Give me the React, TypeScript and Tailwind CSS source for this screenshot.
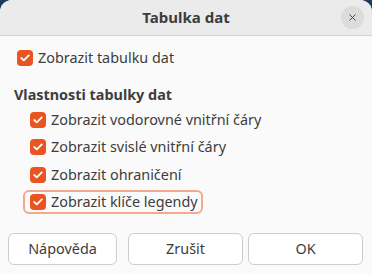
import { X } from "lucide-react";

interface CheckRowProps {
  label: string;
  focused?: boolean;
}

function CheckBox() {
  return (
    <span className="flex h-[16px] w-[16px] shrink-0 items-center justify-center rounded-[4px] bg-[#e95420]">
      <svg width="10" height="8" viewBox="0 0 10 8" fill="none">
        <path d="M1.2 4 L3.8 6.4 L8.8 1.4" stroke="white" strokeWidth="1.8" strokeLinecap="round" strokeLinejoin="round" />
      </svg>
    </span>
  );
}

function CheckRow({ label, focused }: CheckRowProps) {
  return (
    <div
      className={
        focused
          ? "flex h-[24px] w-fit items-center gap-[5px] rounded-[6px] border-2 border-[#f4a98c] pl-[5px] pr-[3px] -ml-[7px]"
          : "flex h-[24px] items-center gap-[5px]"
      }
    >
      <CheckBox />
      <span>{label}</span>
    </div>
  );
}

export default function App() {
  const rows = [
    "Zobrazit vodorovné vnitřní čáry",
    "Zobrazit svislé vnitřní čáry",
    "Zobrazit ohraničení",
  ];

  return (
    <div className="h-[274px] w-[372px] bg-[#1f3b5c] font-['Noto_Sans',sans-serif] text-[14.4px] text-[#3d3d3d]">
      <div className="flex h-full flex-col overflow-hidden rounded-t-[12px] bg-[#fafafa]">
        <div className="relative flex h-[36px] shrink-0 items-center justify-center border-b border-[#d4d4d4] bg-[#ebebeb]">
          <span className="text-[15px] font-bold">Tabulka dat</span>
          <button className="absolute right-[8px] top-[6px] flex h-[23px] w-[23px] items-center justify-center rounded-full bg-[#dcdcdc]">
            <X size={11} strokeWidth={2} className="text-[#3d3d3d]" />
          </button>
        </div>

        <div className="flex flex-col px-[17px] pt-[10px]">
          <CheckRow label="Zobrazit tabulku dat" />
          <p className="mt-[14px] -ml-[3px] font-bold">Vlastnosti tabulky dat</p>
          <div className="mt-[2px] flex flex-col gap-[3.5px] pl-[13px]">
            {rows.map((r) => (
              <CheckRow key={r} label={r} />
            ))}
            <CheckRow label="Zobrazit klíče legendy" focused />
          </div>
        </div>

        <div className="mt-auto mb-[9px] flex px-[8px]">
          <button className="h-[32px] w-[109px] rounded-[6px] border border-[#cdcdcd] bg-white">Nápověda</button>
          <button className="ml-[11px] h-[32px] w-[115px] rounded-[6px] border border-[#cdcdcd] bg-white">Zrušit</button>
          <button className="ml-[5px] h-[32px] w-[115px] rounded-[6px] border border-[#cdcdcd] bg-white">OK</button>
        </div>
      </div>
    </div>
  );
}
